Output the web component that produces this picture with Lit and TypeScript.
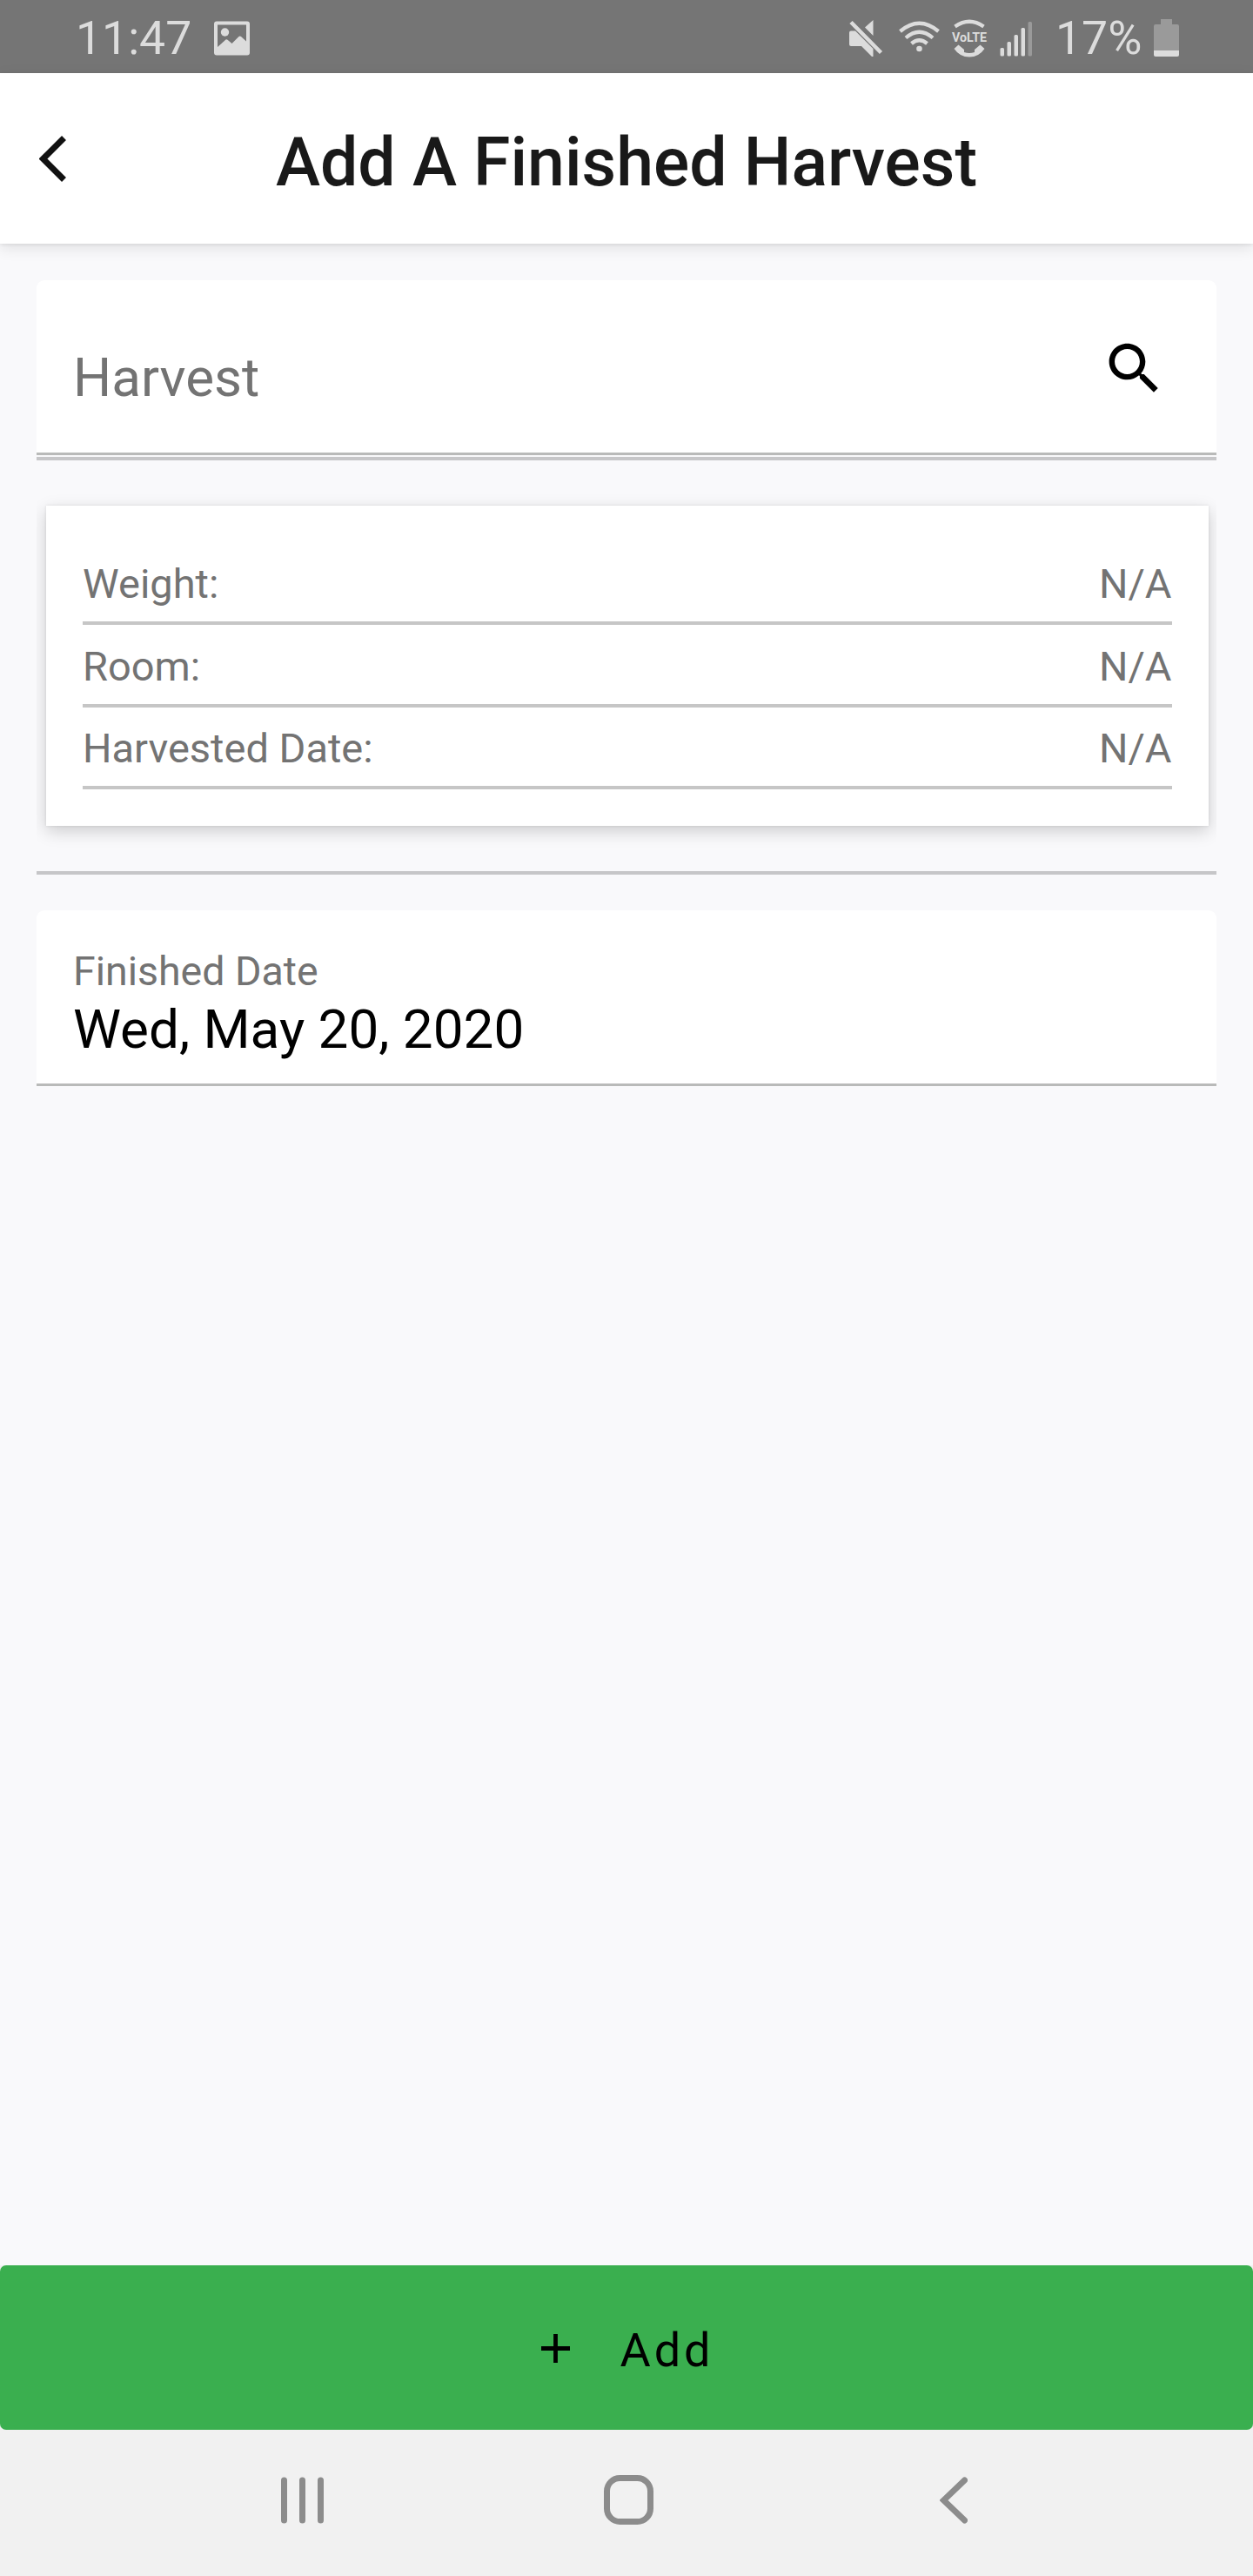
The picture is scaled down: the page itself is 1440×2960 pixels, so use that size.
import { LitElement, html, css } from "lit";
import { customElement, property } from "lit/decorators.js";

@customElement("status-bar")
class StatusBar extends LitElement {
  static styles = css`
    :host {
      display: flex;
      align-items: center;
      box-sizing: border-box;
      height: 84px;
      padding: 3px 85px 0 87px;
      background: #757575;
      color: #dcdcdc;
      font-size: 53.5px;
      line-height: 62px;
    }
    svg { display: block; flex: none; fill: currentColor; }
    .time { width: 159px; }
    .spacer { flex: 1; }
    .mute { margin-right: 18px; }
    .wifi { margin-right: 11px; }
    .volte { margin-right: 12px; }
    .signal { margin-right: 26px; }
    .percent { width: 113px; white-space: nowrap; }
    .label { font: 700 15px Roboto, "Liberation Sans", sans-serif; }
    .line { fill: none; stroke: currentColor; }
    .dim { fill: #9a9a9a; }
  `;

  render() {
    return html`
      <span class="time">11:47</span>
      <svg width="41" height="42" viewBox="0 0 41 42">
        <path fill-rule="evenodd" d="M3 1.500H38Q41 1.500 41 4.500V37.500Q41 40.500 38 40.500H3Q0 40.500 0 37.500V4.500Q0 1.500 3 1.500ZM4 5.500V31L13.500 22.500Q14.500 22 15.500 22.800L20.500 27L28.500 19Q29.700 17.800 31 19L37 24.500V5.500Z"/>
        <circle cx="12.500" cy="14" r="4.700"/>
      </svg>
      <span class="spacer"></span>
      <svg class="mute" width="39" height="42" viewBox="0 0 39 42">
        <path d="M27.500 0V18L18 8.500ZM2 12.500H7L27.500 33V42H26L14 30H2Q0 30 0 28V14.500Q0 12.500 2 12.500Z"/>
        <path class="line" stroke-width="4.500" d="M2 2.500L36.500 37.500"/>
      </svg>
      <svg class="wifi" width="47" height="42" viewBox="0 0 47 42">
        <path class="line" stroke-width="4.300" d="M1.500 13Q23.500 -5.500 45.500 13M8 20.500Q23.500 7 39 20.500M14.500 27Q23.500 19.500 32.500 27"/>
        <circle cx="23.500" cy="33" r="3.300"/>
      </svg>
      <svg class="volte" width="46" height="44" viewBox="-3 0 46 44">
        <path class="line" stroke-width="4.300" d="M3.500 8.500Q20 -3 36.500 8.500"/>
        <text class="label" x="0" y="25.500" textLength="40" lengthAdjust="spacingAndGlyphs">VoLTE</text>
        <path d="M2.500 34L7.500 29.500L14 35V38Q20 40 26 38V35L32.500 29.500L37.500 34Q31 43.500 20 43.500Q9 43.500 2.500 34Z"/>
      </svg>
      <svg class="signal" width="38" height="42" viewBox="0 0 38 42">
        <rect x="0.500" y="32" width="4.500" height="9.500" rx="1.500"/>
        <rect x="8.500" y="25" width="4.500" height="16.500" rx="1.500"/>
        <rect x="16.500" y="17" width="4.500" height="24.500" rx="1.500"/>
        <rect x="24.500" y="9" width="4.500" height="32.500" rx="1.500"/>
        <rect class="dim" x="32.500" y="2" width="4.500" height="39.500" rx="1.500"/>
      </svg>
      <span class="percent">17%</span>
      <svg width="29" height="44" viewBox="0 0 29 44">
        <path class="dim" d="M8 0H21V6H27Q29 6 29 8V36H0V8Q0 6 2 6H8Z"/>
        <path d="M0 36H29V41Q29 43 27 43H2Q0 43 0 41Z"/>
      </svg>
    `;
  }
}

@customElement("title-bar")
class TitleBar extends LitElement {
  @property() heading = "";

  static styles = css`
    :host {
      display: grid;
      grid-template-columns: 120px 1fr 120px;
      align-items: center;
      box-sizing: border-box;
      height: 196px;
      background: #fff;
      box-shadow: 0 1px 4px rgba(0, 0, 0, 0.08), 0 5px 16px rgba(0, 0, 0, 0.1);
      color: #191919;
    }
    .back { display: block; margin: 0 0 0 45px; }
    .heading {
      margin: 10px 0 0;
      font-size: 77px;
      font-weight: 500;
      line-height: 90px;
      text-align: center;
      white-space: nowrap;
    }
  `;

  render() {
    return html`
      <svg class="back" width="34" height="56" viewBox="0 0 34 56">
        <path d="M28.500 4.500L4.500 28.500L28.500 52.500" fill="none" stroke="#111" stroke-width="7"/>
      </svg>
      <h1 class="heading">${this.heading}</h1>
    `;
  }
}

const rows = [
  ["Weight:", "N/A"],
  ["Room:", "N/A"],
  ["Harvested Date:", "N/A"],
];

@customElement("app-root")
class AppRoot extends LitElement {
  static styles = css`
    :host {
      display: flex;
      flex-direction: column;
      width: 1440px;
      height: 2960px;
      overflow: hidden;
      background: #f9f9fb;
      font-family: Roboto, "Liberation Sans", sans-serif;
      color: #737373;
    }
    .content { flex: 1; padding: 42px 42px 0; }
    .field {
      box-sizing: border-box;
      background: #fff;
      border-bottom: 3px solid #b9bab9;
      border-radius: 9px 9px 0 0;
    }
    .search {
      display: flex;
      justify-content: space-between;
      height: 201px;
      padding: 63px 56px 0 42px;
      font-size: 62px;
      line-height: 98px;
    }
    .icon { display: block; }
    .details {
      padding: 52px 9.500px 52px 11px;
      border-top: 4px solid #c6c6c8;
      border-bottom: 4px solid #c6c6c8;
      margin-top: 2px;
      clip-path: inset(0);
    }
    .card {
      box-sizing: border-box;
      height: 368px;
      padding: 42.500px 42px 0;
      background: #fff;
      box-shadow: 0 6px 18px rgba(0, 0, 0, 0.18), 0 0 3px rgba(0, 0, 0, 0.1);
    }
    .row {
      display: flex;
      justify-content: space-between;
      box-sizing: border-box;
      height: 94.500px;
      padding-top: 19.500px;
      border-bottom: 4px solid #c6c6c6;
      font-size: 47px;
      line-height: 56px;
    }
    .date { height: 202px; margin-top: 41px; padding: 42px 42px 0; }
    .caption { font-size: 46.500px; line-height: 56px; }
    .value { color: #000; font-size: 62px; line-height: 78px; }
    .add {
      display: flex;
      align-items: center;
      justify-content: center;
      gap: 57px;
      height: 189px;
      border: 0;
      border-radius: 7px;
      padding: 5px 0 0 3px;
      background: #3aaf4f;
      color: #000;
      font: 400 54px Roboto, "Liberation Sans", sans-serif;
      letter-spacing: 4px;
    }
    .plus { margin-bottom: 4px; }
    .footer { display: flex; flex-direction: column; background: #f1f1f1; }
    .nav {
      display: flex;
      align-items: center;
      box-sizing: border-box;
      height: 168px;
      padding: 0 0 7px 323px;
    }
    .recents { margin-right: 321.500px; }
    .home { margin-right: 329.500px; }
    .stroke { fill: none; stroke: #8c8c8c; stroke-width: 7; stroke-linecap: round; }
  `;

  render() {
    return html`
      <status-bar></status-bar>
      <title-bar heading="Add A Finished Harvest"></title-bar>
      <main class="content">
        <div class="field search">
          <span>Harvest</span>
          <svg class="icon" width="77" height="77" viewBox="0 0 24 24">
            <path d="M15.500 14h-.79l-.28-.27C15.410 12.590 16 11.110 16 9.500 16 5.910 13.090 3 9.500 3S3 5.910 3 9.500 5.910 16 9.500 16c1.610 0 3.090-.59 4.230-1.570l.27.28v.79l5 4.990L20.490 19l-4.990-5zm-6 0C7.010 14 5 11.990 5 9.500S7.010 5 9.500 5 14 7.010 14 9.500 11.990 14 9.500 14z"/>
          </svg>
        </div>
        <section class="details">
          <div class="card">
            ${rows.map(([name, value]) => html`
              <div class="row"><span>${name}</span><span>${value}</span></div>
            `)}
          </div>
        </section>
        <div class="field date">
          <div class="caption">Finished Date</div>
          <div class="value">Wed, May 20, 2020</div>
        </div>
      </main>
      <footer class="footer">
        <button class="add">
          <svg class="plus" width="33" height="33" viewBox="0 0 33 33">
            <path d="M0 16.500H33M16.500 0V33" stroke="#000" stroke-width="4.800"/>
          </svg>
          <span>Add</span>
        </button>
        <nav class="nav">
          <svg class="recents" width="49" height="54" viewBox="0 0 49 54">
            <path class="stroke" d="M3.500 4V50M24.500 4V50M45.500 4V50"/>
          </svg>
          <svg class="home" width="57" height="57" viewBox="0 0 57 57">
            <rect class="stroke" x="3.500" y="3.500" width="50" height="50" rx="15"/>
          </svg>
          <svg width="32" height="54" viewBox="0 0 32 54">
            <path class="stroke" d="M28.500 4L4.500 27L28.500 50"/>
          </svg>
        </nav>
      </footer>
    `;
  }
}
